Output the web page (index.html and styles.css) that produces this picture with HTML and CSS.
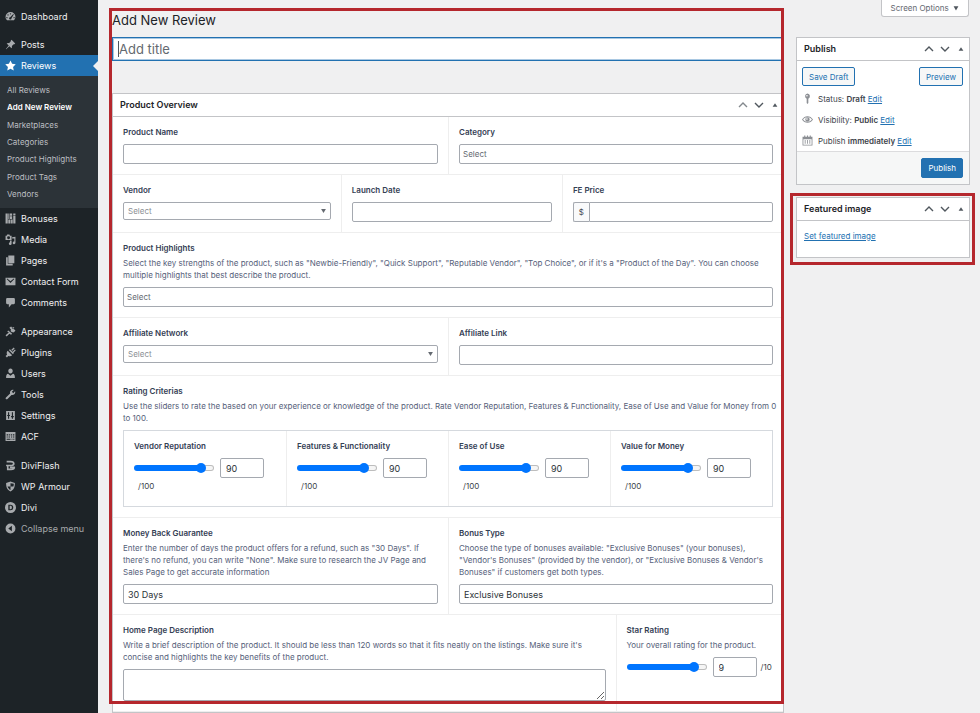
FILE: index.html
```
<!DOCTYPE html>
<html lang="en">
<head>
    <meta charset="UTF-8">
    <meta name="viewport" content="width=device-width, initial-scale=1.0">
    <title>Add New Review</title>
    <link rel="stylesheet" href="styles.css">
</head>
<body>
    <nav class="admin-menu" aria-label="Main menu">
        <ul class="menu">
            <li><a href="#"><svg viewBox="0 0 20 20"><path fill-rule="evenodd" d="M3.8 17h12.4A8.6 8.6 0 0 0 19 11a9 9 0 0 0-18 0c0 2.400 1 4.500 2.800 6zM10 4a1.200 1.200 0 1 1 0 2.400A1.200 1.200 0 0 1 10 4zM5.500 6a1.200 1.200 0 1 1 0 2.400 1.200 1.200 0 0 1 0-2.400zm-2 5a1.200 1.200 0 1 1 0 2.400 1.200 1.200 0 0 1 0-2.400zm13 0a1.200 1.200 0 1 1 0 2.400 1.200 1.200 0 0 1 0-2.400zM15 5.500l1 .8-4.200 6.700a2.200 2.200 0 1 1-2.300-1.800z"/></svg>Dashboard</a></li>
            <li class="separator"></li>
            <li><a href="#"><svg viewBox="0 0 20 20"><path d="M10.400 3l1.500-1.500 6.700 6.700-1.500 1.500-1.300-.3-3.300 3.300c.5 1.600.3 3.100-.7 4.300l-3.800-3.800L2 18.500l-.5-.5 5.300-6L3 8.200c1.200-1 2.700-1.200 4.300-.7l3.300-3.300z"/></svg>Posts</a></li>
            <li class="current">
                <a href="#"><svg viewBox="0 0 20 20"><path d="M10 1l2.900 6 6.600.9-4.800 4.600 1.200 6.500-5.900-3.200L4.100 19l1.200-6.500L.5 7.900 7.100 7z"/></svg>Reviews</a>
                <ul class="submenu">
                    <li><a href="#">All Reviews</a></li>
                    <li><a class="active" href="#">Add New Review</a></li>
                    <li><a href="#">Marketplaces</a></li>
                    <li><a href="#">Categories</a></li>
                    <li><a href="#">Product Highlights</a></li>
                    <li><a href="#">Product Tags</a></li>
                    <li><a href="#">Vendors</a></li>
                </ul>
            </li>
            <li><a href="#"><svg viewBox="0 0 20 20"><path d="M1 1h4v18H1zM6 1h2v10H6zM6 12h4v7H6zM9 1h4v4H9zM9 6h4v5H9zM11 12h3v7h-3zM15 1h4v3h-4zM15 5h4v14h-4z"/></svg>Bonuses</a></li>
            <li><a href="#"><svg viewBox="0 0 20 20"><path fill-rule="evenodd" d="M1 3h2l1-2h4l1 2h3v8H1zm5.500 1.300a2.700 2.700 0 1 0 0 5.400 2.700 2.700 0 0 0 0-5.400zM13 6l6-1v11a2.500 2.500 0 1 1-2-2.400V8h-4zM9 12h3v5.500A2.500 2.500 0 1 1 9 15z"/></svg>Media</a></li>
            <li><a href="#"><svg viewBox="0 0 20 20"><path d="M6 1h11v14H6zM2 4h3v12h9v3H2z"/></svg>Pages</a></li>
            <li><a href="#"><svg viewBox="0 0 20 20"><path fill-rule="evenodd" d="M1 3h18v14H1zM3 5.500l7 7 7-7-1-1-6 5-6-5z"/></svg>Contact Form</a></li>
            <li><a href="#"><svg viewBox="0 0 20 20"><path d="M4 2h12a2 2 0 0 1 2 2v7a2 2 0 0 1-2 2h-4l-5 6v-6H4a2 2 0 0 1-2-2V4a2 2 0 0 1 2-2z"/></svg>Comments</a></li>
            <li class="separator"></li>
            <li><a href="#"><svg viewBox="0 0 20 20"><path d="M8 3l3-2 8 7-3 4-2-1-1 1-3-3 1-2zM6 8l7 6-2 2-3-2-5 5-2-2 6-5-3-2zM12 3l3 3 2-4z"/></svg>Appearance</a></li>
            <li><a href="#"><svg viewBox="0 0 20 20"><path d="M5 7l8 8c-2 2-4.500 2.500-7 1.300L3.500 19 1 16.500l2.700-2.500C2.500 11.500 3 9 5 7zM7 5.500L9 4l7 7-1.500 2zM11.500 5L16 1l1.500 1.500L13.500 7zM14 8.500L18 4.500 19.500 6l-4 4.500z"/></svg>Plugins</a></li>
            <li><a href="#"><svg viewBox="0 0 20 20"><path d="M10 1c2.500 0 4 1.800 4 4.500S12.300 10 10 10 6 8.200 6 5.500 7.500 1 10 1zM5.500 10.500L10 14l4.500-3.500c2.500.5 3.500 2.500 3.500 7.500H2c0-5 1-7 3.500-7.500z"/></svg>Users</a></li>
            <li><a href="#"><svg viewBox="0 0 20 20"><path d="M17 9.500c-1.500 1.400-3.400 1.800-5.200 1.200L4.500 18c-1 1-2.300 1-3 .2s-.6-2 .3-2.900L9.300 8.200C8.700 6.300 9 4.400 10.500 3c1.500-1.600 3.500-2 5.300-1.300l-3.300 3.400 2.500 2.400 3.300-3.300c.7 1.800.3 3.800-1.300 5.300z"/></svg>Tools</a></li>
            <li><a href="#"><svg viewBox="0 0 20 20"><path fill-rule="evenodd" d="M2 2h16v16H2zM5.500 4v5H4v2h1.500v5h2v-5H9V9H7.500V4zm7 0v7H11v2h1.500v3h2v-3H16v-2h-1.500V4z"/></svg>Settings</a></li>
            <li><a href="#"><svg viewBox="0 0 20 20"><path fill-rule="evenodd" d="M1 2h18v16H1zM3 6v2h3V6zm4.500 0v2h2V6zM11 6v2h2V6zm3.500 0v2H17V6zM3 10v2h2v-2zm3.500 0v2H9v-2zM11 10v2h2v-2zm3.500 0v2H17v-2zM3 14v2h7v-2zm9 0v2h1.500v-2zm3 0v2h2v-2z"/></svg>ACF</a></li>
            <li class="separator"></li>
            <li><a href="#"><svg class="line" viewBox="0 0 20 20"><path d="M3 3h7c4 0 6 2 6 4s-2 3-4 3H2M5 10v7h6c4 0 6-2 6-4M9 13.500h9"/></svg>DiviFlash</a></li>
            <li><a href="#"><svg viewBox="0 0 20 20"><path fill-rule="evenodd" d="M10 1l8 2.500c0 8-2 12.500-8 15.500-6-3-8-7.500-8-15.500zM10 4v6h5.300c.5-1.500.7-3 .7-5zM10 10H4.700c1 3 2.700 5 5.300 6.500z"/></svg>WP Armour</a></li>
            <li><a href="#"><svg viewBox="0 0 20 20"><path fill-rule="evenodd" d="M10 0a10 10 0 1 1 0 20 10 10 0 0 1 0-20zM6 5v10h4c3.300 0 5-2 5-5s-1.700-5-5-5zm2.500 2H10c1.700 0 2.500 1 2.500 3S11.700 13 10 13H8.500z"/></svg>Divi</a></li>
            <li><a class="collapse" href="#"><svg viewBox="0 0 20 20"><path fill-rule="evenodd" d="M10 1a9 9 0 1 1 0 18 9 9 0 0 1 0-18zm2.500 4L6 10l6.500 5z"/></svg>Collapse menu</a></li>
        </ul>
    </nav>

    <main class="wrap">
        <section class="editor">
            <h1 class="page-title">Add New Review</h1>
            <input class="title-input" type="text" placeholder="Add title" aria-label="Add title">

            <div class="postbox">
                <div class="postbox-header">
                    <h2>Product Overview</h2>
                    <div class="handles">
                        <button type="button" class="faded" aria-label="Move up"><svg viewBox="0 0 10 10"><path d="M1 7l4-4 4 4"/></svg></button>
                        <button type="button" aria-label="Move down"><svg viewBox="0 0 10 10"><path d="M1 3l4 4 4-4"/></svg></button>
                        <button type="button" class="toggle" aria-label="Toggle panel"><svg viewBox="0 0 10 10"><path d="M5 2l4 6H1z"/></svg></button>
                    </div>
                </div>

                <div class="row halves">
                    <div class="field">
                        <label for="product-name">Product Name</label>
                        <input id="product-name" type="text">
                    </div>
                    <div class="field">
                        <label for="category">Category</label>
                        <select id="category" class="multi"><option>Select</option></select>
                    </div>
                </div>

                <div class="row thirds">
                    <div class="field">
                        <label for="vendor">Vendor</label>
                        <select id="vendor" class="arrow"><option>Select</option></select>
                    </div>
                    <div class="field">
                        <label for="launch-date">Launch Date</label>
                        <input id="launch-date" type="text">
                    </div>
                    <div class="field">
                        <label for="fe-price">FE Price</label>
                        <div class="input-group">
                            <span class="prepend">$</span>
                            <input id="fe-price" type="text">
                        </div>
                    </div>
                </div>

                <div class="row">
                    <div class="field">
                        <label for="highlights">Product Highlights</label>
                        <p>Select the key strengths of the product, such as "Newbie-Friendly", "Quick Support", "Reputable Vendor", "Top Choice", or if it's a "Product of the Day". You can choose multiple highlights that best describe the product.</p>
                        <select id="highlights" class="multi"><option>Select</option></select>
                    </div>
                </div>

                <div class="row halves">
                    <div class="field">
                        <label for="network">Affiliate Network</label>
                        <select id="network" class="arrow"><option>Select</option></select>
                    </div>
                    <div class="field">
                        <label for="link">Affiliate Link</label>
                        <input id="link" type="text">
                    </div>
                </div>

                <div class="row">
                    <div class="field">
                        <h3>Rating Criterias</h3>
                        <p>Use the sliders to rate the based on your experience or knowledge of the product. Rate Vendor Reputation, Features &amp; Functionality, Ease of Use and Value for Money from 0 to 100.</p>
                        <div class="ratings">
                            <div class="field">
                                <label for="reputation">Vendor Reputation</label>
                                <div class="range">
                                    <input id="reputation" type="range" max="100" value="90">
                                    <input type="text" value="90" aria-label="Vendor Reputation value">
                                    <span>/100</span>
                                </div>
                            </div>
                            <div class="field">
                                <label for="features">Features &amp; Functionality</label>
                                <div class="range">
                                    <input id="features" type="range" max="100" value="90">
                                    <input type="text" value="90" aria-label="Features value">
                                    <span>/100</span>
                                </div>
                            </div>
                            <div class="field">
                                <label for="ease">Ease of Use</label>
                                <div class="range">
                                    <input id="ease" type="range" max="100" value="90">
                                    <input type="text" value="90" aria-label="Ease of Use value">
                                    <span>/100</span>
                                </div>
                            </div>
                            <div class="field">
                                <label for="money">Value for Money</label>
                                <div class="range">
                                    <input id="money" type="range" max="100" value="90">
                                    <input type="text" value="90" aria-label="Value for Money value">
                                    <span>/100</span>
                                </div>
                            </div>
                        </div>
                    </div>
                </div>

                <div class="row halves">
                    <div class="field">
                        <label for="guarantee">Money Back Guarantee</label>
                        <p>Enter the number of days the product offers for a refund, such as "30 Days". If there's no refund, you can write "None". Make sure to research the JV Page and Sales Page to get accurate information</p>
                        <input id="guarantee" type="text" value="30 Days">
                    </div>
                    <div class="field">
                        <label for="bonus-type">Bonus Type</label>
                        <p>Choose the type of bonuses available: "Exclusive Bonuses" (your bonuses), "Vendor's Bonuses" (provided by the vendor), or "Exclusive Bonuses &amp; Vendor's Bonuses" if customers get both types.</p>
                        <select id="bonus-type"><option>Exclusive Bonuses</option></select>
                    </div>
                </div>

                <div class="row description">
                    <div class="field">
                        <label for="home-description">Home Page Description</label>
                        <p>Write a brief description of the product. It should be less than 120 words so that it fits neatly on the listings. Make sure it's concise and highlights the key benefits of the product.</p>
                        <textarea id="home-description"></textarea>
                    </div>
                    <div class="field">
                        <label for="star-rating">Star Rating</label>
                        <p>Your overall rating for the product.</p>
                        <div class="range">
                            <input id="star-rating" type="range" max="10" value="9">
                            <input type="text" value="9" aria-label="Star Rating value">
                            <span>/10</span>
                        </div>
                    </div>
                </div>
            </div>
        </section>

        <aside class="side">
            <button type="button" class="screen-options">Screen Options <svg viewBox="0 0 10 10"><path d="M1 2h8L5 9z"/></svg></button>

            <section class="postbox publish">
                <div class="postbox-header">
                    <h2>Publish</h2>
                    <div class="handles">
                        <button type="button" aria-label="Move up"><svg viewBox="0 0 10 10"><path d="M1 7l4-4 4 4"/></svg></button>
                        <button type="button" aria-label="Move down"><svg viewBox="0 0 10 10"><path d="M1 3l4 4 4-4"/></svg></button>
                        <button type="button" class="toggle" aria-label="Toggle panel"><svg viewBox="0 0 10 10"><path d="M5 2l4 6H1z"/></svg></button>
                    </div>
                </div>
                <div class="publish-body">
                    <div class="actions">
                        <button type="button" class="button">Save Draft</button>
                        <button type="button" class="button">Preview</button>
                    </div>
                    <ul class="status">
                        <li><svg viewBox="0 0 20 20"><path fill-rule="evenodd" d="M10 1a5 5 0 0 1 1.500 9.500V18L10 20l-1.500-2v-7.500A5 5 0 0 1 10 1zm-1 2.500a1.500 1.500 0 1 0 0 3 1.500 1.500 0 0 0 0-3z"/></svg><span>Status: <b>Draft</b> <a href="#">Edit</a></span></li>
                        <li><svg viewBox="0 0 20 20"><path fill-rule="evenodd" d="M10 4c4 0 7.500 2.200 10 6-2.500 3.800-6 6-10 6S2.500 13.800 0 10c2.500-3.800 6-6 10-6zm0 1.500C6.800 5.500 4 7.200 2 10c2 2.800 4.800 4.500 8 4.500s6-1.700 8-4.500c-2-2.800-4.800-4.500-8-4.500zM10 6a4 4 0 1 1 0 8 4 4 0 0 1 0-8zM9 7.500A1.500 1.500 0 1 0 9 10.500a1.500 1.500 0 0 0 0-3z"/></svg><span>Visibility: <b>Public</b> <a href="#">Edit</a></span></li>
                        <li><svg viewBox="0 0 20 20"><path fill-rule="evenodd" d="M1 3h3V1h2v2h3V1h2v2h3V1h2v2h3v16H1zM2.500 7.500v10h15v-10zM5 9h1.500v7H5zM9.300 9h1.500v7H9.300zM13.500 9H15v7h-1.500z"/></svg><span>Publish <b>immediately</b> <a href="#">Edit</a></span></li>
                    </ul>
                </div>
                <div class="publish-footer">
                    <button type="button" class="button primary">Publish</button>
                </div>
            </section>

            <div class="highlight">
                <section class="postbox">
                    <div class="postbox-header">
                        <h2>Featured image</h2>
                        <div class="handles">
                            <button type="button" aria-label="Move up"><svg viewBox="0 0 10 10"><path d="M1 7l4-4 4 4"/></svg></button>
                            <button type="button" aria-label="Move down"><svg viewBox="0 0 10 10"><path d="M1 3l4 4 4-4"/></svg></button>
                            <button type="button" class="toggle" aria-label="Toggle panel"><svg viewBox="0 0 10 10"><path d="M5 2l4 6H1z"/></svg></button>
                        </div>
                    </div>
                    <div class="featured-body"><a href="#">Set featured image</a></div>
                </section>
            </div>
        </aside>
    </main>
</body>
</html>
```
FILE: styles.css
```
* {
    box-sizing: border-box;
}

body {
    margin: 0;
    min-height: 100vh;
    display: flex;
    background: #f0f0f1;
    color: #3c434a;
    font-family: Inter, "Liberation Sans", sans-serif;
    font-size: 8px;
    line-height: 12px;
}

h1, h2, h3, p, ul {
    margin: 0;
    padding: 0;
}

ul {
    list-style: none;
}

a {
    color: #2271b1;
}

button, input, select, textarea {
    font-family: inherit;
    margin: 0;
}

/* Admin menu */
.admin-menu {
    flex: 0 0 98px;
    background: #1d2327;
    padding-top: 6px;
    font-size: 9px;
}

.menu a {
    display: flex;
    align-items: center;
    gap: 5px;
    height: 21px;
    padding-left: 5px;
    color: #f0f0f1;
    font-weight: 400;
    text-decoration: none;
    white-space: nowrap;
}

.menu svg {
    width: 11px;
    height: 11px;
    fill: #a7aaad;
}

.menu svg.line {
    fill: none;
    stroke: #a7aaad;
    stroke-width: 3;
}

.separator {
    height: 8px;
}

.separator:nth-child(2) {
    height: 7px;
}

.current > a {
    position: relative;
    background: #2271b1;
    color: #fff;
}

.current > a svg {
    fill: #fff;
}

.current > a::after {
    content: "";
    position: absolute;
    right: 0;
    top: 6px;
    border: 5px solid transparent;
    border-left: 0;
    border-right-color: #f0f0f1;
}

.menu .submenu {
    display: grid;
    grid-auto-rows: 1fr;
    height: 132px;
    padding: 5px 0;
    background: #2c3338;
    font-size: 8px;
}

.menu .submenu a {
    height: 100%;
    padding-left: 7px;
    color: #bcbfc2;
}

.menu .submenu a.active {
    color: #fff;
    font-weight: 600;
}

.menu a.collapse {
    color: #a7aaad;
}

/* Page */
.wrap {
    flex: 1;
    min-width: 0;
    display: flex;
    gap: 6px;
    padding: 0 5px 0 11px;
}

.editor {
    position: relative;
    flex: 1;
    min-width: 0;
    margin-top: 8px;
    padding: 4px 0 0 3px;
}

.editor::after {
    content: "";
    position: absolute;
    inset: 0 0 9px;
    border: 3px solid #b5272d;
    pointer-events: none;
}

.page-title {
    margin-bottom: 9px;
    color: #1d2327;
    font-size: 13px;
    font-weight: 400;
    line-height: 16px;
}

/* the thin gradient is the text cursor */
.title-input {
    display: block;
    width: 100%;
    height: 24px;
    margin-bottom: 32px;
    padding: 0 6px;
    border: 1px solid #2271b1;
    background: #fff linear-gradient(#50575e, #50575e) no-repeat 5px center / 1px 16px;
    box-shadow: inset 0 0 0 1px #a9c8e2;
    font-size: 13px;
}

.title-input::placeholder {
    color: #646970;
}

/* Boxes */
.postbox {
    border: 1px solid #c3c4c7;
    background: #fff;
}

.postbox-header {
    display: flex;
    align-items: center;
    justify-content: space-between;
    height: 23px;
    padding: 0 3px 0 7px;
    border-bottom: 1px solid #c3c4c7;
}

.postbox-header h2 {
    color: #1d2327;
    font-size: 9px;
    font-weight: 600;
}

.handles {
    display: flex;
    align-items: center;
    gap: 6px;
}

.handles button {
    width: 10px;
    height: 10px;
    padding: 0;
    border: 0;
    background: none;
}

.handles svg {
    display: block;
    width: 10px;
    height: 10px;
    fill: none;
    stroke: #50575e;
    stroke-width: 1.4;
}

.handles .faded {
    opacity: .7;
}

.handles .toggle {
    padding: 2px;
}

.handles .toggle svg {
    width: 6px;
    height: 6px;
    fill: #50575e;
    stroke: none;
}

/* Fields */
.row {
    display: grid;
    border-bottom: 1px solid #eee;
}

.halves {
    grid-template-columns: 1fr 1fr;
}

.thirds {
    grid-template-columns: 34% 33% 33%;
}

.description {
    grid-template-columns: 3fr 1fr;
}

.field {
    min-width: 0;
    padding: 9px 10px 10px;
}

.field + .field {
    border-left: 1px solid #eee;
}

.field label, .field h3 {
    display: block;
    margin-bottom: 6px;
    color: #344054;
    font-size: 8px;
    font-weight: 600;
    line-height: 12px;
}

.field p {
    margin: -3px -6px 6px 0;
    color: #56617a;
}

.field input, .field select, .field textarea {
    display: block;
    width: 100%;
    height: 20px;
    padding: 0 4px;
    border: 1px solid #a5a9b0;
    border-radius: 2px;
    background: #fff;
    color: #2c3338;
    font-size: 9px;
}

.field select {
    appearance: none;
}

.field .multi {
    padding: 0 3px;
    color: #646970;
    font-size: 8px;
}

.field .arrow {
    height: 18px;
    background: #fff url("data:image/svg+xml,%3Csvg xmlns='http://www.w3.org/2000/svg' viewBox='0 0 6 5'%3E%3Cpath d='M0 0h6L3 5z' fill='%23646970'/%3E%3C/svg%3E") no-repeat right 4px center / 5px 4px;
    color: #8c8f94;
    font-size: 8px;
}

.field textarea {
    height: 32px;
}

.input-group {
    display: flex;
}

.prepend {
    flex: 0 0 16px;
    border: 1px solid #a5a9b0;
    border-right: 0;
    border-radius: 2px 0 0 2px;
    background: #f9fafb;
    line-height: 18px;
    text-align: center;
}

.field .input-group input {
    flex: 1;
    min-width: 0;
    border-radius: 0 2px 2px 0;
}

.ratings {
    display: grid;
    grid-template-columns: repeat(4, 1fr);
    border: 1px solid #d5d9de;
}

.range {
    display: flex;
    flex-wrap: wrap;
    align-items: center;
    row-gap: 2px;
}

.ratings .field {
    padding-bottom: 14px;
}

.range span {
    padding-left: 4px;
}

.range input[type="text"] {
    width: 44px;
    margin-left: 6px;
    padding-left: 5px;
}

.range input[type="range"] {
    appearance: none;
    width: 80px;
    height: 10px;
    padding: 0;
    border: 0;
    background: none;
}

/* filled part, then the empty part with its outline */
.range input[type="range"]::-webkit-slider-runnable-track {
    height: 6px;
    border: 1px solid transparent;
    border-radius: 3px;
    background:
        linear-gradient(to right, #0075ff 85%, transparent 85%) border-box,
        linear-gradient(#f5f5f5, #f5f5f5) padding-box,
        linear-gradient(#bdbdbd, #bdbdbd) border-box;
}

.range input[type="range"]::-webkit-slider-thumb {
    appearance: none;
    width: 10px;
    height: 10px;
    margin-top: -3px;
    border-radius: 50%;
    background: #0075ff;
}

/* Right column */
.side {
    flex: 0 0 185px;
}

.screen-options {
    display: block;
    height: 17px;
    margin: 0 6px 20px auto;
    padding: 0 9px;
    border: 1px solid #c3c4c7;
    border-top: 0;
    border-radius: 0 0 3px 3px;
    background: #fff;
    color: #646970;
    font-size: 8px;
}

.screen-options svg {
    width: 6px;
    height: 6px;
    margin-left: 2px;
    fill: #50575e;
}

.publish {
    margin: 0 5px 8px 6px;
}

.publish-body {
    padding: 6px 6px 0 5px;
}

.actions {
    display: flex;
    justify-content: space-between;
    margin-bottom: 2px;
}

.button {
    height: 19px;
    padding: 0 6px;
    border: 1px solid #2271b1;
    border-radius: 2px;
    background: #f6f7f7;
    color: #2271b1;
    font-size: 8px;
}

.button.primary {
    height: 20px;
    background: #2271b1;
    color: #fff;
}

.status li {
    display: flex;
    align-items: center;
    gap: 5px;
    height: 21px;
}

.status svg {
    width: 11px;
    height: 11px;
    fill: #8c8f94;
}

.status b {
    font-weight: 600;
}

.publish-footer {
    display: flex;
    justify-content: flex-end;
    padding: 6px;
    border-top: 1px solid #dcdcde;
    background: #f6f7f7;
}

.highlight {
    padding: 1px 2px 4px 3px;
    border: 3px solid #b5272d;
}

.featured-body {
    padding: 9px 7px 15px;
}
```
